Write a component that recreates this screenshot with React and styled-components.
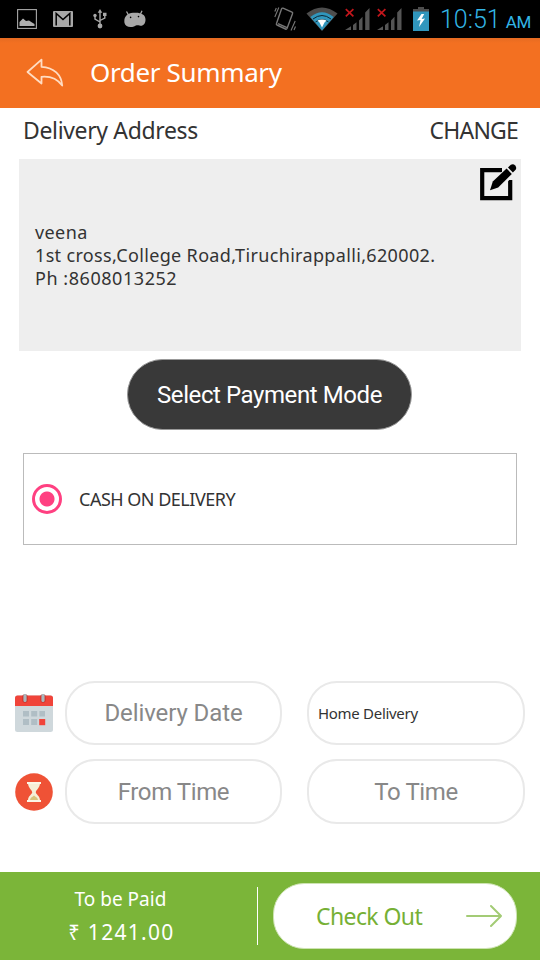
import React from 'react'
import styled, { createGlobalStyle } from 'styled-components'

const GlobalStyle = createGlobalStyle`
    * {
        box-sizing: border-box;
    }
    body {
        margin: 0;
        background: #fff;
    }
`

function PictureIcon() {
    return (
        <svg width="20" height="20" viewBox="0 0 20 20">
            <rect x="0.6" y="0.6" width="18.8" height="18.8" fill="none" stroke="#a8a8a8" strokeWidth="1.1" />
            <path d="M2.5 17V13L6 9.5L9 12L12 11.5L15 13.5L17.5 15V17Z" fill="#b0b0b0" />
        </svg>
    )
}

function MailIcon() {
    return (
        <svg width="20" height="16" viewBox="0 0 20 16">
            <rect width="20" height="16" rx="1" fill="#a8a8a8" />
            <path d="M3.2 14.6V2.4L10 8.6L16.8 2.4V14.6" fill="none" stroke="#000" strokeWidth="1.5" />
        </svg>
    )
}

function UsbIcon() {
    return (
        <svg width="14" height="20" viewBox="0 0 14 20" fill="none" stroke="#a8a8a8" strokeWidth="1.4">
            <path d="M7 3V16M7 13L2 10V7M7 11.5L11.8 9V6" />
            <circle cx="7" cy="17" r="2.4" fill="#a8a8a8" stroke="none" />
            <circle cx="2" cy="6.5" r="1.7" fill="#a8a8a8" stroke="none" />
            <path d="M4.7 3.8L7 0L9.3 3.8ZM10 3.8H13.5V7H10Z" fill="#a8a8a8" stroke="none" />
        </svg>
    )
}

function DroidIcon() {
    return (
        <svg width="22" height="18" viewBox="0 0 22 18">
            <path d="M4.5 5L2.5 1.5M16.5 4L18 0.8" stroke="#a8a8a8" strokeWidth="1.3" />
            <path d="M0.5 13C-0.5 7 3 3.4 9 2.8C16 2 21.5 4 21.5 9.5C21.5 14 19 16.5 15.5 15.6C13 15 12 15.6 10 16.4C6 17.8 1.4 17 0.5 13Z" fill="#a8a8a8" />
            <circle cx="6.6" cy="7.4" r="0.8" fill="#000" />
            <circle cx="14.5" cy="6.6" r="0.8" fill="#000" />
        </svg>
    )
}

function VibrateIcon() {
    return (
        <svg width="22" height="26" viewBox="0 0 22 26" fill="none" stroke="#777" strokeWidth="1.4">
            <path d="M9 2.2L18 6.2Q19 6.8 18.5 7.8L13 22.5Q12.5 23.5 11.5 23L3 19Q2 18.5 2.5 17.5L7.5 3Q8 1.8 9 2.2Z" />
            <path d="M4 17.6L13 21.6" strokeWidth="1.4" />
            <path d="M0.8 11L4.8 1.5M0.8 5.5L2.3 2M21.2 15L17 24.5M21.5 20.5L20 24" strokeWidth="1.1" />
        </svg>
    )
}

function WifiIcon() {
    return (
        <svg width="32" height="24" viewBox="0 0 32 24">
            <path d="M0.5 6.5Q16 -5.5 31.5 6.5L16 24Z" fill="#4d4d4d" />
            <path d="M4.3 10Q16 0.5 27.7 10L16 23.5Z" fill="#3096bd" />
            <path d="M7 12Q16 5 25 12" fill="none" stroke="#0b2531" strokeWidth="1" />
            <path d="M9.5 15Q16 10 22.5 15" fill="none" stroke="#0b2531" strokeWidth="0.9" />
            <path d="M11.5 13.5Q16 11.5 20.5 13.5L18.5 15.5L16 20.5L13.5 15.5Z" fill="#fff" />
        </svg>
    )
}

function SignalIcon() {
    return (
        <svg width="25" height="24" viewBox="0 0 25 24">
            <path d="M0 23L6 19.2V23ZM8 18L11.5 15.2V23H8ZM14 13.4L17.5 9.8V23H14ZM20.2 5.5L24.5 1V23H20.2Z" fill="#555" />
            <path d="M0.8 2.2L8.4 9.4M8.4 2.2L0.8 9.4" stroke="#c4161c" strokeWidth="1.7" />
        </svg>
    )
}

function BatteryIcon() {
    return (
        <svg width="16" height="24" viewBox="0 0 16 24">
            <path d="M5 0H11V2H16V5H0V2H5Z" fill="#4d4d4d" />
            <rect y="4.5" width="16" height="19.5" fill="#3096bd" />
            <path d="M8.5 7L4 13.5L7.5 13L6 20L12 11.6L8.6 12L11.2 7Z" fill="#fff" />
        </svg>
    )
}

function BackIcon() {
    return (
        <svg width="38" height="30" viewBox="0 0 38 30" fill="none" stroke="#ffdcc2" strokeWidth="1.8" strokeLinejoin="round">
            <path d="M15.5 1.6L1.5 14L15.5 25.5V18.8C24 18 31 20.5 36.2 27.5C35.5 17 28 9.3 15.5 8.8Z" />
        </svg>
    )
}

function EditIcon() {
    return (
        <svg width="38" height="38" viewBox="0 0 38 38">
            <path d="M22 6.2H2.2V34.2H30.2V16" fill="none" stroke="#000" strokeWidth="4.2" />
            <path d="M10 27L13 16L30.5 0L37 8L21 24.5Z" fill="#eee" />
            <path d="M10 26.2L12.8 17.6L26.6 4.5L31.8 9.9L18.2 23.4Z" fill="#000" />
            <path d="M28 3.4L30.8 0.8Q33.2 -0.6 35.2 1.4Q37 3.6 35.6 5.8L32.9 8.5Z" fill="#000" />
        </svg>
    )
}

function CalendarIcon() {
    return (
        <svg width="38" height="38" viewBox="0 0 38 38">
            <rect y="1.5" width="38" height="36.5" rx="2.5" fill="#cfd8dc" />
            <path d="M0 12V4Q0 1.5 2.5 1.5H35.5Q38 1.5 38 4V12Z" fill="#f0443a" />
            <path d="M10 3V6M28 3V6" stroke="#c9342c" strokeWidth="5.4" strokeLinecap="round" />
            <path d="M10 1.5V6.5M28 1.5V6.5" stroke="#a9b7bd" strokeWidth="3.2" strokeLinecap="round" />
            <path d="M8 17H14V22.6H8ZM16.2 17H22.2V22.6H16.2ZM24.4 17H30V22.6H24.4ZM8 25H14V31H8ZM16.2 25H22.2V31H16.2Z" fill="#b0bec5" />
            <rect x="24.2" y="25" width="6" height="6.2" fill="#f0443a" />
        </svg>
    )
}

function HourglassIcon() {
    return (
        <svg width="38" height="38" viewBox="0 0 38 38">
            <circle cx="19" cy="19" r="18.8" fill="#ef5236" />
            <path d="M13 10C13 15 17.2 17 17.2 19.2C17.2 21.5 13 22.5 13 27.5H25C25 22.5 20.8 21.5 20.8 19.2C20.8 17 25 15 25 10Z" fill="#f6efd8" />
            <path d="M15 27C15.5 24.5 17.5 24 19 22.6C20.5 24 22.5 24.5 23 27Z" fill="#d8c47c" />
            <path d="M12 10H26M12 28H26" stroke="#fbf6e6" strokeWidth="2" />
        </svg>
    )
}

function ArrowIcon() {
    return (
        <svg width="36" height="24" viewBox="0 0 36 24" fill="none" stroke="#a3cb75" strokeWidth="2" strokeLinecap="round" strokeLinejoin="round">
            <path d="M1 12H35M25 2L35 12L25 22" />
        </svg>
    )
}

function App() {
    return (
        <Screen>
            <GlobalStyle />
            <StatusBar>
                <Notifications>
                    <PictureIcon />
                    <MailIcon />
                    <UsbIcon />
                    <DroidIcon />
                </Notifications>
                <SystemIcons>
                    <VibrateIcon />
                    <WifiIcon />
                    <SignalIcon />
                    <SignalIcon />
                    <BatteryIcon />
                </SystemIcons>
                <Clock>10:51<small>AM</small></Clock>
            </StatusBar>
            <Header>
                <BackIcon />
                <Title>Order Summary</Title>
            </Header>
            <SectionBar>
                <SectionTitle>Delivery Address</SectionTitle>
                <ChangeLink>CHANGE</ChangeLink>
            </SectionBar>
            <AddressCard>
                <Address>
                    <AddressLine $spacing="0.4px">veena</AddressLine>
                    <AddressLine $spacing="0.34px">1st cross,College Road,Tiruchirappalli,620002.</AddressLine>
                    <AddressLine $spacing="0.55px">Ph :8608013252</AddressLine>
                </Address>
                <EditButton>
                    <EditIcon />
                </EditButton>
            </AddressCard>
            <PaymentButton>Select Payment Mode</PaymentButton>
            <PaymentOption>
                <Radio />
                <OptionLabel>CASH ON DELIVERY</OptionLabel>
            </PaymentOption>
            <Schedule>
                <CalendarIcon />
                <Field $spacing="-0.1px">Delivery Date</Field>
                <SelectField $spacing="-0.3px">Home Delivery</SelectField>
                <HourglassIcon />
                <Field $spacing="-0.4px">From Time</Field>
                <Field $spacing="-0.4px">To Time</Field>
            </Schedule>
            <Footer>
                <Total>
                    <TotalLabel>To be Paid</TotalLabel>
                    <Amount><span>₹</span> 1241.00</Amount>
                </Total>
                <Divider />
                <CheckoutButton>
                    <span>Check Out</span>
                    <ArrowIcon />
                </CheckoutButton>
            </Footer>
        </Screen>
    )
}

export default App

const Screen = styled.div`
    display: flex;
    flex-direction: column;
    width: 540px;
    height: 960px;
    overflow: hidden;
    background: #fff;
    color: #333;
    font-family: "Noto Sans", sans-serif;
    white-space: nowrap;

    svg {
        display: block;
        flex-shrink: 0;
    }
`
const StatusBar = styled.div`
    display: flex;
    align-items: center;
    height: 38px;
    padding: 0 9px 0 17px;
    background: #000;
`
const Notifications = styled.div`
    display: flex;
    align-items: center;
    gap: 16px;

    svg:nth-child(3) {
        margin: 0 1px 0 4px;
    }
`
const SystemIcons = styled.div`
    display: flex;
    align-items: center;
    gap: 7px;
    margin-left: auto;

    svg:nth-child(1) {
        margin-right: 3px;
    }
    svg:nth-child(5) {
        margin-left: 4px;
    }
`
const Clock = styled.div`
    width: 91px;
    margin-left: 11px;
    padding-top: 4px;
    color: #33b5e5;
    font-family: Roboto, sans-serif;
    font-size: 25px;
    font-weight: 300;
    line-height: 34px;

    small {
        margin-left: 5px;
        font-size: 17px;
        font-weight: 400;
        letter-spacing: -0.4px;
    }
`
const Header = styled.header`
    display: flex;
    align-items: center;
    height: 70px;
    padding-left: 26px;
    background: linear-gradient(#e56b22 0, #f37021 5px);
`
const Title = styled.h1`
    margin: -2px 0 0 26px;
    color: #fff;
    font-size: 26px;
    font-weight: 400;
    letter-spacing: -0.35px;
`
const SectionBar = styled.div`
    display: flex;
    align-items: center;
    justify-content: space-between;
    height: 51px;
    padding: 0 23px 8px;
`
const SectionTitle = styled.h2`
    margin: 0;
    font-size: 23px;
    font-weight: 400;
    letter-spacing: -0.35px;
`
const ChangeLink = styled.span`
    margin-right: -1px;
    font-size: 23px;
    letter-spacing: -0.8px;
`
const AddressCard = styled.div`
    display: flex;
    align-items: center;
    justify-content: space-between;
    height: 192px;
    margin: 0 19px;
    padding: 0 3px 0 16px;
    background: #eee;
`
const Address = styled.div`
    padding-top: 1px;
`
const AddressLine = styled.p`
    margin: 0;
    font-size: 18px;
    line-height: 23px;
    letter-spacing: ${props => props.$spacing};
`
const EditButton = styled.div`
    align-self: flex-start;
    margin-top: 5px;
`
const PaymentButton = styled.div`
    align-self: center;
    width: 285px;
    height: 71px;
    margin-top: 8px;
    margin-right: 1px;
    border: 1px solid #999;
    border-radius: 38px;
    background: #393939;
    color: #fff;
    font-family: Roboto, sans-serif;
    font-size: 24px;
    letter-spacing: -0.42px;
    line-height: 70px;
    text-align: center;
`
const PaymentOption = styled.div`
    display: flex;
    align-items: center;
    height: 92px;
    margin: 23px 23px 0;
    padding-left: 8px;
    border: 1px solid #bbb;
`
const Radio = styled.div`
    width: 30px;
    height: 30px;
    border: 3px solid #ff4081;
    border-radius: 50%;
    background: radial-gradient(circle, #ff4081 7px, #fff 8px);
`
const OptionLabel = styled.span`
    margin-left: 17px;
    font-size: 18px;
    letter-spacing: -0.5px;
`
const Schedule = styled.div`
    display: grid;
    grid-template-columns: 38px 217px 218px;
    grid-template-rows: 64px 65px;
    align-items: center;
    margin: 136px 15px 0;
    row-gap: 14px;

    > :nth-child(3n + 2) {
        margin-left: 12px;
        margin-right: -12px;
    }
    > :nth-child(3n) {
        margin-left: 37px;
        margin-right: -37px;
    }
`
const Field = styled.div`
    display: flex;
    align-items: center;
    justify-content: center;
    height: 100%;
    border: 2px solid #e9e9e9;
    border-radius: 30px;
    color: #888;
    font-family: Roboto, sans-serif;
    font-size: 24px;
    letter-spacing: ${props => props.$spacing};
`
const SelectField = styled(Field)`
    justify-content: flex-start;
    padding-left: 9px;
    color: #333;
    font-family: "Noto Sans", sans-serif;
    font-size: 15px;
`
const Footer = styled.footer`
    display: flex;
    align-items: center;
    height: 88px;
    margin-top: auto;
    background: #7bb539;
    color: #fff;
`
const Total = styled.div`
    width: 257px;
    padding-right: 16px;
    text-align: center;
`
const TotalLabel = styled.div`
    font-size: 19px;
    line-height: 33px;
`
const Amount = styled.div`
    padding-left: 2px;
    font-size: 21px;
    line-height: 33px;
    letter-spacing: 1.3px;

    span {
        font-size: 20px;
    }
`
const Divider = styled.div`
    width: 1px;
    height: 58px;
    background: #fff;
`
const CheckoutButton = styled.div`
    display: flex;
    align-items: center;
    justify-content: space-between;
    width: 244px;
    height: 66px;
    margin-left: 15px;
    padding: 0 14px 0 42px;
    border: 1px solid #cde3b2;
    border-radius: 31px;
    background: #fff;
    color: #76b035;
    font-size: 23px;
    letter-spacing: -0.6px;
`
